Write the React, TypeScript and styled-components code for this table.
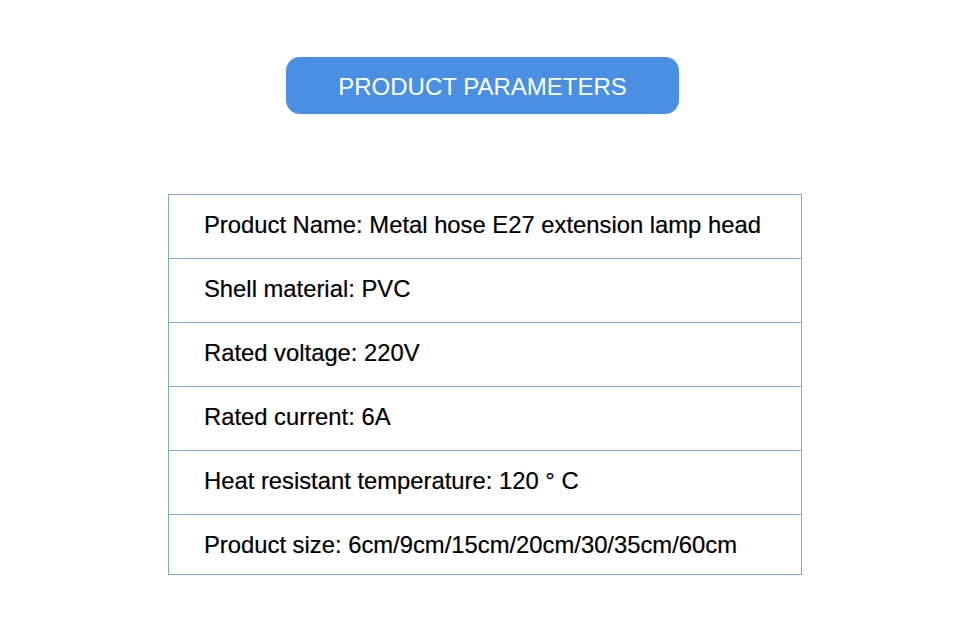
import React from 'react'
import styled, { createGlobalStyle } from 'styled-components'

const GlobalStyle = createGlobalStyle`
  html, body {
    margin: 0;
    padding: 0;
    background: #ffffff;
  }
  body {
    font-family: 'Liberation Sans', Arial, sans-serif;
  }
`

const Page = styled.div`
  width: 960px;
  height: 629px;
  display: flex;
  flex-direction: column;
  align-items: center;
  padding: 57px 0 0 5px;
  box-sizing: border-box;
`

const Badge = styled.div`
  width: 393px;
  height: 57px;
  padding-top: 3px;
  box-sizing: border-box;
  border-radius: 14px;
  background: #4a90e2;
  color: #ffffff;
  font-size: 24px;
  display: flex;
  align-items: center;
  justify-content: center;
`

const Table = styled.div`
  margin: 80px 0 0 5px;
  width: 634px;
  border: 1px solid #7ba7da;
  box-sizing: border-box;
  display: flex;
  flex-direction: column;
`

const Row = styled.div<{ $last?: boolean }>`
  height: ${({ $last }) => ($last ? '59px' : '64px')};
  display: flex;
  align-items: center;
  padding: ${({ $last }) => ($last ? '0 0 0 35px' : '0 0 4px 35px')};
  font-size: 23.8px;
  color: #000000;
  -webkit-text-stroke: 0.2px #000000;
  border-bottom: ${({ $last }) => ($last ? 'none' : '1px solid #7ba7da')};
  box-sizing: border-box;
`

const params = [
  'Product Name: Metal hose E27 extension lamp head',
  'Shell material: PVC',
  'Rated voltage: 220V',
  'Rated current: 6A',
  'Heat resistant temperature: 120 ° C',
  'Product size: 6cm/9cm/15cm/20cm/30/35cm/60cm',
]

const App: React.FC = () => (
  <>
    <GlobalStyle />
    <Page>
      <Badge>PRODUCT PARAMETERS</Badge>
      <Table>
        {params.map((p, i) => (
          <Row key={p} $last={i === params.length - 1}>
            {p}
          </Row>
        ))}
      </Table>
    </Page>
  </>
)

export default App
